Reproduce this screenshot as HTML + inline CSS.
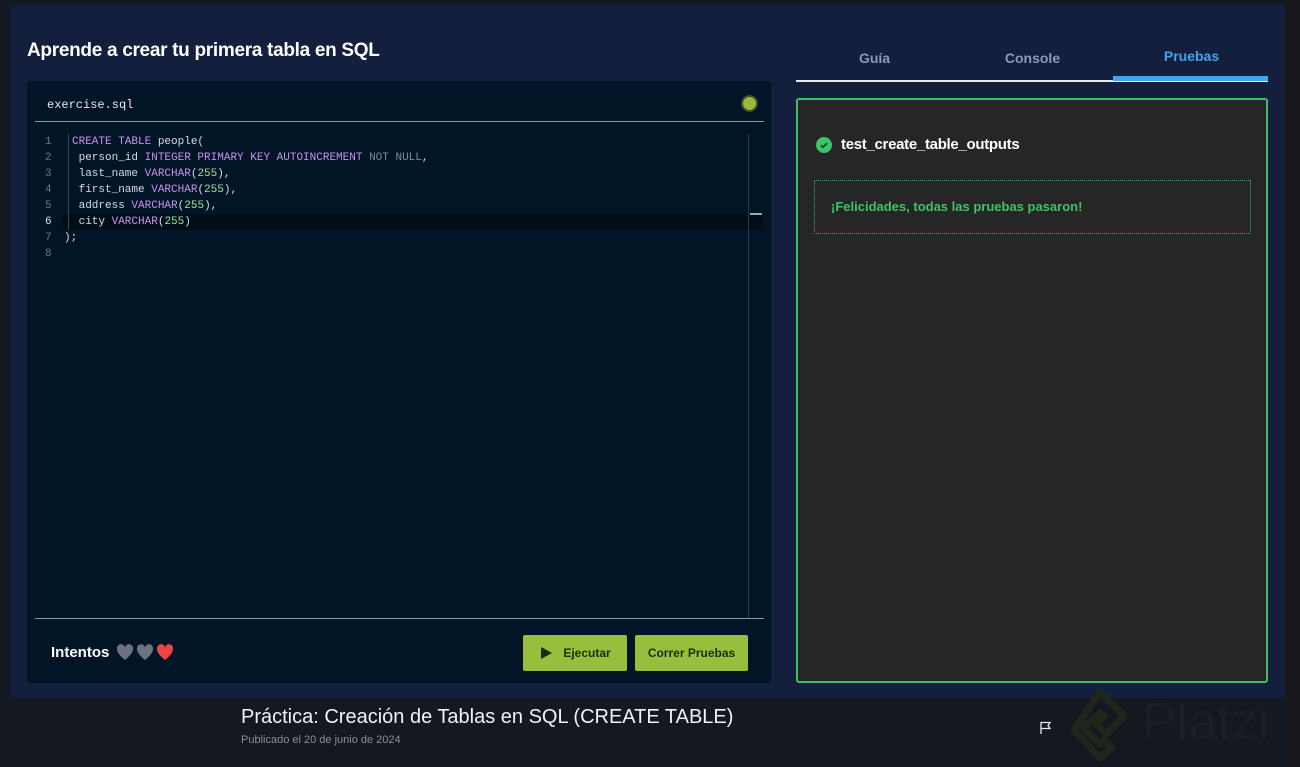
<!DOCTYPE html>
<html><head><meta charset="utf-8"><style>
*{margin:0;padding:0;box-sizing:border-box}
body{width:1300px;height:767px;background:#141821;font-family:"Liberation Sans",sans-serif;position:relative;overflow:hidden}
.main{position:absolute;left:10px;top:5px;width:1275px;height:693px;background:#131f3d}
.rstrip{position:absolute;left:1285px;top:0;width:15px;height:767px;background:#16181d}
h1{position:absolute;left:27px;top:40px;color:#fff;font-size:19px;font-weight:bold;letter-spacing:-0.3px}
.ed{position:absolute;left:27px;top:81px;width:744px;height:602px;background:#021526;border-radius:4px}
.fname{position:absolute;left:20px;top:17px;color:#e8e8e8;font:12px "Liberation Mono",monospace}
.dot{position:absolute;left:714px;top:14px;width:17px;height:17px;border-radius:50%;background:#9ab93b;border:2px solid #3e4d2a}
.hl{position:absolute;left:8px;top:40px;width:729px;height:1px;background:#8a9aa8}
.code{position:absolute;left:0;top:53px;font:11px/16px "Liberation Mono",monospace;color:#d6dde4}
.ln{position:absolute;left:18px;width:14px;text-align:left;color:#6c7a88}
.tx{position:absolute;left:45px;white-space:pre}
.gut{position:absolute;left:41px;top:53px;width:1px;height:96px;background:#3a4a5a}
.k{color:#c792ea}.n{color:#a3e0a0}.g{color:#7f8c98}
.cur{position:absolute;left:36px;top:133px;width:700px;height:16px;background:#010e1a}
.sb{position:absolute;left:721px;top:53px;width:1px;height:484px;background:#2a3a4a}
.sbm{position:absolute;left:723px;top:132px;width:12px;height:2px;background:#9aa}
.bl{position:absolute;left:8px;top:537px;width:729px;height:1px;background:#8a9aa8}
.int{position:absolute;left:24px;top:563px;color:#fff;font-size:15px;font-weight:bold;display:flex;align-items:center;gap:2px}
.btn{position:absolute;top:554px;height:36px;background:#97bf3d;color:#1d2a14;font-size:12px;font-weight:bold;display:flex;align-items:center;justify-content:center;border-radius:2px}
.tab{position:absolute;top:50px;font-size:14px;font-weight:bold;color:#8b9ab5;text-align:center;width:157px}
.box{position:absolute;left:796px;top:98px;width:472px;height:585px;background:#262626;border:2px solid #3fbf68;border-radius:3px}
.tt{position:absolute;left:43px;top:36px;color:#fff;font-size:15px;font-weight:bold;letter-spacing:-0.3px}
.ck{position:absolute;left:18px;top:37px;width:16px;height:16px;border-radius:50%;background:#3cc466}
.msg{position:absolute;left:16px;top:80px;width:437px;height:54px;border:1px dotted #3fae5c;color:#3cc466;font-size:13px;font-weight:bold;padding:18px 0 0 16px}
.title{position:absolute;left:241px;top:706px;color:#f2f2f2;font-size:20px}
.pub{position:absolute;left:241px;top:734px;color:#8a8f98;font-size:11px}
</style></head><body>
<div class="main"></div><div class="rstrip"></div>
<h1>Aprende a crear tu primera tabla en SQL</h1>
<div class="ed">
<div class="fname">exercise.sql</div><div class="dot"></div><div class="hl"></div>
<div class="cur"></div><div class="gut"></div><div class="sb"></div><div class="sbm"></div>
<div class="code">
<div class="ln" style="top:0">1</div><div class="tx" style="top:0"><span class="k">CREATE TABLE</span> people(</div>
<div class="ln" style="top:16px">2</div><div class="tx" style="top:16px"> person_id <span class="k">INTEGER PRIMARY KEY AUTOINCREMENT</span> <span class="g">NOT NULL</span>,</div>
<div class="ln" style="top:32px">3</div><div class="tx" style="top:32px"> last_name <span class="k">VARCHAR</span>(<span class="n">255</span>),</div>
<div class="ln" style="top:48px">4</div><div class="tx" style="top:48px"> first_name <span class="k">VARCHAR</span>(<span class="n">255</span>),</div>
<div class="ln" style="top:64px">5</div><div class="tx" style="top:64px"> address <span class="k">VARCHAR</span>(<span class="n">255</span>),</div>
<div class="ln" style="top:80px;color:#dde">6</div><div class="tx" style="top:80px"> city <span class="k">VARCHAR</span>(<span class="n">255</span>)</div>
<div class="ln" style="top:96px">7</div><div class="tx" style="top:96px;left:37px">);</div>
<div class="ln" style="top:112px">8</div>
</div>
<div class="bl"></div>
<div class="int">Intentos&nbsp;
<svg width="18" height="17" viewBox="0 0 18 17"><path d="M9 16 C3 11 1 8 1 5 A4 4 0 0 1 9 3.5 A4 4 0 0 1 17 5 C17 8 15 11 9 16Z" fill="#6b7280"/></svg>
<svg width="18" height="17" viewBox="0 0 18 17"><path d="M9 16 C3 11 1 8 1 5 A4 4 0 0 1 9 3.5 A4 4 0 0 1 17 5 C17 8 15 11 9 16Z" fill="#6b7280"/></svg>
<svg width="18" height="17" viewBox="0 0 18 17"><path d="M9 16 C3 11 1 8 1 5 A4 4 0 0 1 9 3.5 A4 4 0 0 1 17 5 C17 8 15 11 9 16Z" fill="#ef4444"/></svg></div>
<div class="btn" style="left:496px;width:104px"><svg width="14" height="14" viewBox="0 0 14 14" style="margin-right:10px"><path d="M2 1 L13 7 L2 13Z" fill="#1d2a14"/></svg>Ejecutar</div>
<div class="btn" style="left:608px;width:113px">Correr Pruebas</div>
</div>
<div class="tab" style="left:796px">Guía</div>
<div class="tab" style="left:954px">Console</div>
<div class="tab" style="left:1113px;top:48px;color:#3fa6ee">Pruebas</div>
<div style="position:absolute;left:796px;top:80px;width:472px;height:2px;background:#e8e8e8"></div>
<div style="position:absolute;left:1113px;top:76px;width:155px;height:5px;background:#3fa6ee"></div>
<div class="box"><div class="ck"><svg width="16" height="16" viewBox="0 0 16 16"><path d="M5 8.2l2 2 4-4" stroke="#0f3a1c" stroke-width="1.5" fill="none"/></svg></div><div class="tt">test_create_table_outputs</div>
<div class="msg">¡Felicidades, todas las pruebas pasaron!</div></div>
<div class="title">Práctica: Creación de Tablas en SQL (CREATE TABLE)</div>
<div class="pub">Publicado el 20 de junio de 2024</div>
<svg style="position:absolute;left:1039px;top:721px" width="14" height="14" viewBox="0 0 14 14"><path d="M2 13V1.5h9l-2 3 2 3H2" stroke="#e8e8e8" stroke-width="1.3" fill="none"/></svg>
<svg style="position:absolute;left:1070px;top:686px" width="62" height="76" viewBox="0 0 62 76"><path d="M30 6 L54 30 L36 48 L26 38 L34 30 L30 26 L14 42 L30 58 L34 54 L42 62 L30 72 L4 44 Z" fill="none" stroke="#1f261c" stroke-width="7" stroke-linejoin="round"/></svg>
<div style="position:absolute;left:1142px;top:692px;color:#1a1e26;font-size:52px">Platzi</div>
</body></html>
